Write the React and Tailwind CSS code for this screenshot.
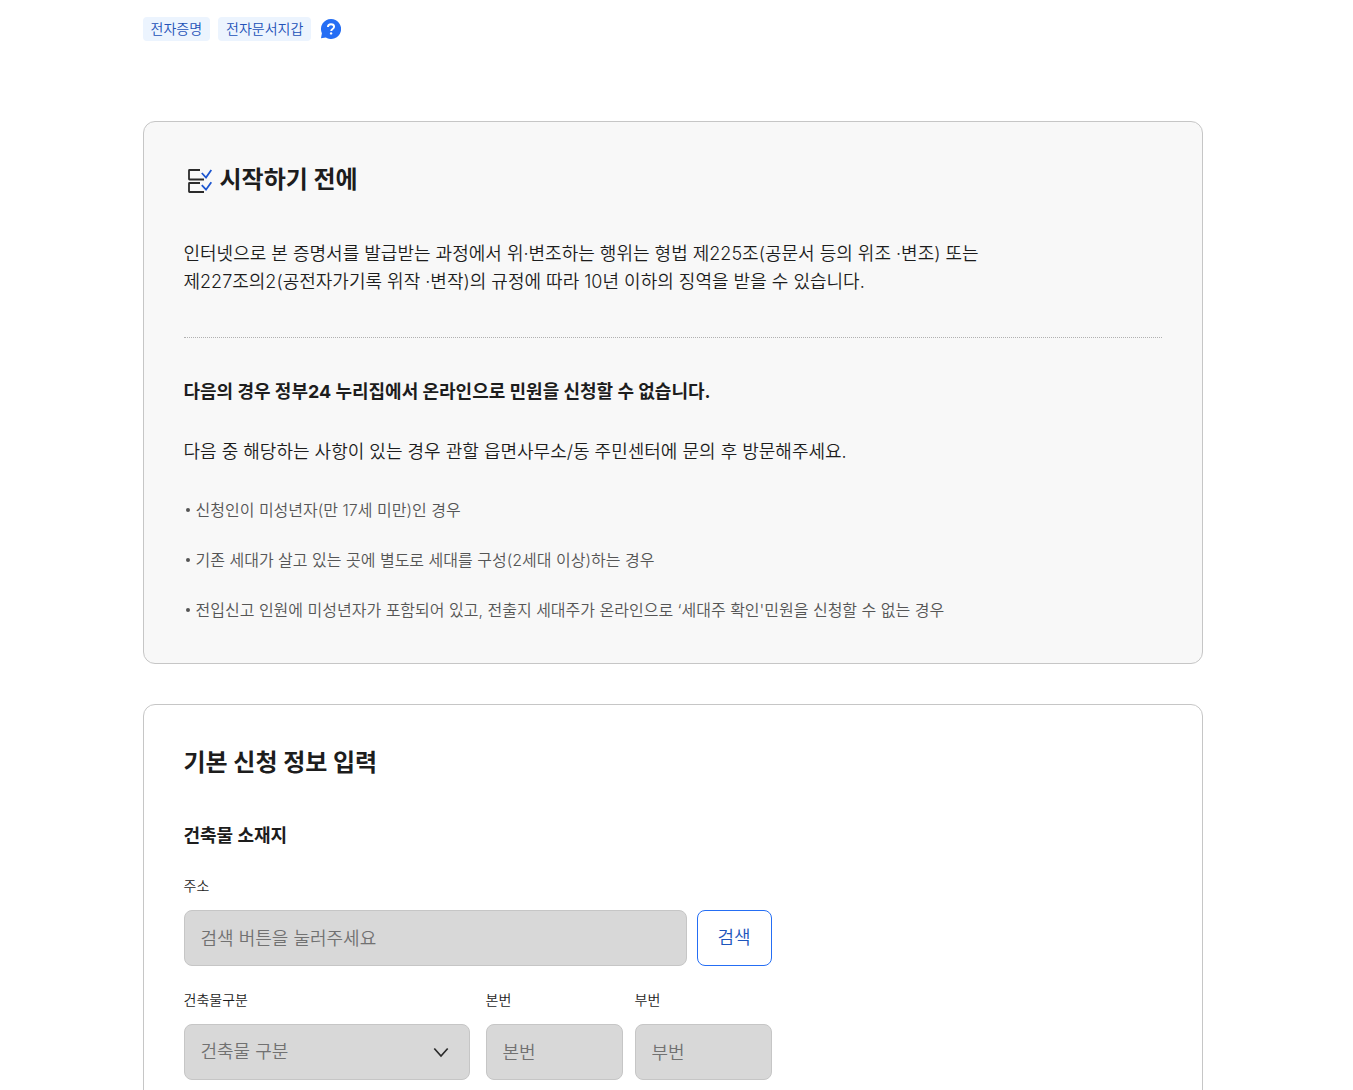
import React from "react";

const fieldBox =
  "h-14 w-full min-w-0 rounded-lg border border-[#c6c6c6] bg-[#d8d8d8] px-4 text-lg text-[#717171] placeholder:text-[#717171] placeholder:opacity-100";

const notices = [
  "신청인이 미성년자(만 17세 미만)인 경우",
  "기존 세대가 살고 있는 곳에 별도로 세대를 구성(2세대 이상)하는 경우",
  "전입신고 인원에 미성년자가 포함되어 있고, 전출지 세대주가 온라인으로 ‘세대주 확인'민원을 신청할 수 없는 경우",
];

function Tag({ children }) {
  return (
    <span className="rounded bg-[#ecf4fe] px-2 text-sm leading-6 text-[#2352b8]">
      {children}
    </span>
  );
}

function HelpIcon() {
  return (
    <svg width="20" height="20" viewBox="0 0 20 20" fill="none" aria-hidden="true">
      <path d="M10 0a10 10 0 1 1-5.200 18.500L0 19.200l.9-5A10 10 0 0 1 10 0Z" fill="#256ef4" />
      <path
        d="M6.900 8C7 6.200 8.200 5.300 10 5.300s3.100 1 3.100 2.500c0 1.100-.6 1.600-1.500 2.200-.9.6-1.400 1-1.400 2"
        stroke="#fff"
        strokeWidth="1.900"
      />
      <circle cx="10.100" cy="14.400" r="1.200" fill="#fff" />
    </svg>
  );
}

function ChecklistIcon() {
  return (
    <svg width="32" height="32" viewBox="0 0 32 32" fill="none" strokeWidth="1.800" aria-hidden="true">
      <path d="M16 6H5.500A.5.5 0 0 0 5 6.500v8.500a.5.500 0 0 0 .5.500H20" stroke="#2b2b2b" />
      <path d="M16 19H5.500A.5.5 0 0 0 5 19.500v8a.5.500 0 0 0 .5.500H20" stroke="#2b2b2b" />
      <path d="m17.800 9 4.200 4.500L27.300 6M17.800 21.200l4.200 4.500 5.300-7.500" stroke="#1d56d0" />
    </svg>
  );
}

function Field({ id, label, className, children }) {
  return (
    <div className={className}>
      <label htmlFor={id} className="mb-3.5 block text-sm leading-5 text-[#1d1d1d]">
        {label}
      </label>
      {children}
    </div>
  );
}

export default function App() {
  return (
    <main className="bg-white pr-2 font-['Inter','Noto_Sans_CJK_KR',sans-serif] font-[350] break-keep text-[#1d1d1d]">
      <div className="mx-auto max-w-[1060px] pt-[17px] pb-10">
        <div className="flex items-center gap-2">
          <Tag>전자증명</Tag>
          <Tag>전자문서지갑</Tag>
          <button type="button" aria-label="도움말" className="ml-0.5">
            <HelpIcon />
          </button>
        </div>

        <section className="mt-20 rounded-xl border border-[#c6c6c6] bg-[#f8f8f8] p-10">
          <h2 className="flex items-center gap-1 text-2xl leading-9 font-bold">
            <ChecklistIcon />
            시작하기 전에
          </h2>
          <p className="mt-[42px] text-lg leading-7">
            인터넷으로 본 증명서를 발급받는 과정에서 위·변조하는 행위는 형법 제225조(공문서 등의 위조 ·변조) 또는
            <br />
            제227조의2(공전자가기록 위작 ·변작)의 규정에 따라 10년 이하의 징역을 받을 수 있습니다.
          </p>
          <hr className="mt-[41px] border-t border-dotted border-[#b1b1b1]" />
          <p className="mt-10 text-lg leading-7 font-bold">
            다음의 경우 정부24 누리집에서 온라인으로 민원을 신청할 수 없습니다.
          </p>
          <p className="mt-8 text-lg leading-7">
            다음 중 해당하는 사항이 있는 경우 관할 읍면사무소/동 주민센터에 문의 후 방문해주세요.
          </p>
          <ul className="mt-8 flex flex-col gap-[26px] pb-px text-base leading-6 text-[#555555]">
            {notices.map((notice) => (
              <li key={notice} className="flex items-center gap-1.5 pl-0.5">
                <span className="size-1 shrink-0 rounded-full bg-[#555555]" />
                {notice}
              </li>
            ))}
          </ul>
        </section>

        <section className="mt-10 rounded-xl border border-[#c6c6c6] bg-white p-10">
          <h2 className="text-2xl leading-9 font-bold">기본 신청 정보 입력</h2>
          <h3 className="mt-[41px] text-lg leading-7 font-bold">건축물 소재지</h3>
          <div className="mt-[26px] flex max-w-[588px] items-end gap-2.5">
            <Field id="address" label="주소" className="min-w-0 flex-1">
              <input id="address" readOnly placeholder="검색 버튼을 눌러주세요" className={fieldBox} />
            </Field>
            <button
              type="button"
              className="h-14 w-[75px] rounded-lg border border-[#256ef4] bg-white text-lg text-[#1d56bc]"
            >
              검색
            </button>
          </div>
          <div className="mt-6 flex max-w-[588px]">
            <Field id="kind" label="건축물구분" className="mr-4 min-w-0 flex-1">
              <div className="relative">
                <select id="kind" className={fieldBox + " appearance-none"}>
                  <option>건축물 구분</option>
                </select>
                <svg
                  className="pointer-events-none absolute top-5 right-5"
                  width="18"
                  height="18"
                  viewBox="0 0 18 18"
                  fill="none"
                  aria-hidden="true"
                >
                  <path d="m2.300 4.500 6.700 7.500 6.700-7.500" stroke="#2b2b2b" strokeWidth="1.700" />
                </svg>
              </div>
            </Field>
            <Field id="main-number" label="본번" className="mr-3 w-[137px]">
              <input id="main-number" readOnly placeholder="본번" className={fieldBox} />
            </Field>
            <Field id="sub-number" label="부번" className="w-[137px]">
              <input id="sub-number" readOnly placeholder="부번" className={fieldBox} />
            </Field>
          </div>
        </section>
      </div>
    </main>
  );
}
